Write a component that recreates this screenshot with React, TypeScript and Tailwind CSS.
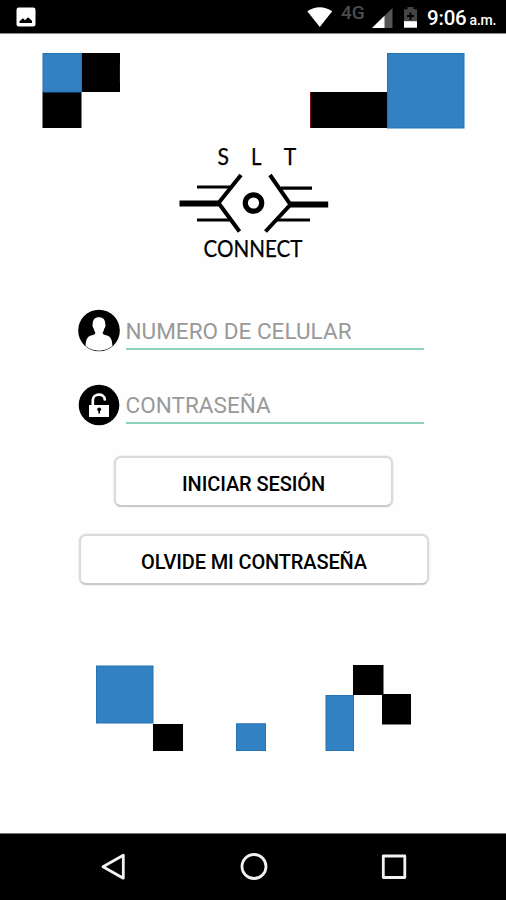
import React from "react";

const BLUE = "#3281c3";

function StatusBar() {
  return (
    <header className="flex h-[34px] shrink-0 items-start border-b border-[#8a8a8a] bg-black text-white">
      <svg className="mt-[7px] ml-4" width="20" height="20" viewBox="0 0 20 20" aria-hidden="true">
        <rect x="0.5" y="0.5" width="19" height="19" rx="2.2" fill="#fff" />
        <path d="M3.5 16 V14.2 L7 11.3 L9 13.3 L12 10.2 L16 13.8 V16 Z" fill="#000" />
      </svg>
      <svg className="mt-[7px] ml-[271px]" width="26" height="20" viewBox="0 0 26 20" aria-hidden="true">
        <path d="M0.3 4.2 Q12.7 -3.6 25.2 4.2 L12.8 20 Z" fill="#fff" />
      </svg>
      <span className="mt-[4px] ml-[8px] w-[27px] text-[19px] leading-[18px] font-medium text-[#4c4c4c]">4G</span>
      <svg className="mt-[8px] ml-[4px]" width="21" height="20" viewBox="0 0 21 20" aria-hidden="true">
        <path d="M0 20 L20.5 0 V20 Z" fill="#555" />
        <path d="M0 20 L12.5 7.8 V20 Z" fill="#fff" />
      </svg>
      <svg className="mt-[7px] ml-[10px]" width="15" height="21" viewBox="0 0 15 21" aria-hidden="true">
        <path d="M1 2.3 H4.5 V0 H10.5 V2.3 H14 V21 H1 Z" fill="#444" />
        <path d="M1 14.2 H14 V20.6 H1 Z" fill="#fff" />
        <path d="M4 9 H11 M7.5 5.5 V13" stroke="#000" strokeWidth="1.8" />
      </svg>
      <span className="mt-[8px] ml-[9px] text-[20.5px] leading-[20px] font-medium tracking-[-0.2px]">9:06</span>
      <span className="mt-[10px] ml-[3px] text-[14px] leading-[20px] font-medium tracking-[-0.2px]">a.m.</span>
    </header>
  );
}

function TopMosaic() {
  return (
    <div className="mt-[19px] flex justify-between pr-[41px] pl-[42px]">
      <svg width="79" height="76" viewBox="0 0 79 76" aria-hidden="true">
        <rect x="39" y="0" width="39" height="39" fill="#000" />
        <rect x="0.5" y="38.5" width="39" height="36.5" fill="#000" />
        <rect x="1" y="0.5" width="38.5" height="38.5" fill={BLUE} stroke="#2473b4" />
        <path d="M77.5 10 V29" stroke="#3c0505" />
      </svg>
      <svg width="155" height="76" viewBox="0 0 155 76" aria-hidden="true">
        <rect x="0" y="39" width="79" height="36" fill="#000" />
        <path d="M0.5 39 V75" stroke="#7d1515" />
        <rect x="77.5" y="0.5" width="76.5" height="74.5" fill={BLUE} stroke="#2473b4" />
      </svg>
    </div>
  );
}

function Logo() {
  return (
    <svg className="mt-[11px] ml-[170px]" width="170" height="124" viewBox="170 140 170 124" role="img">
      <g fontFamily="Lato, 'Open Sans', sans-serif" fill="#000" stroke="#000" strokeWidth="0.25">
        <text x="217.5" y="165" fontSize="22.5" textLength="11.5" lengthAdjust="spacingAndGlyphs">S</text>
        <text x="251" y="165" fontSize="22.5" textLength="10.5" lengthAdjust="spacingAndGlyphs">L</text>
        <text x="283.7" y="165" fontSize="22.5" textLength="12.5" lengthAdjust="spacingAndGlyphs">T</text>
        <text x="203.5" y="257" fontSize="23.5" textLength="99" lengthAdjust="spacingAndGlyphs">CONNECT</text>
      </g>
      <g fill="none" stroke="#000">
        <path d="M241 175 L218.5 203 L239.5 231.5" strokeWidth="4" />
        <path d="M270 175 L290.5 204.5 L265.5 231.5" strokeWidth="4" />
        <path d="M179.5 203.5 H218.5 M290 204.5 H328.2" strokeWidth="6" />
        <path d="M197 187 H230 M281 188.2 H312 M197 220 H230 M277 220 H310" strokeWidth="3.2" />
        <circle cx="253.5" cy="203" r="8.2" strokeWidth="5.2" />
      </g>
    </svg>
  );
}

function UserIcon() {
  return (
    <svg className="shrink-0" width="42" height="43" viewBox="0 0 42 43" aria-hidden="true">
      <circle cx="21" cy="21.5" r="20.8" fill="#000" />
      <path
        d="M21 8.2 C16.8 8.2 14.6 11 14.7 15.2 C14.1 16.3 14.8 18.4 15.6 19.2 C16 21.5 16.9 22.9 17.4 23.5 C17.4 25.2 15.8 25.8 13 26.6 C9.2 27.8 7.8 31 7.6 37 C15 43.2 27 43.2 34.4 37 C34.2 31 32.8 27.8 29 26.6 C26.2 25.8 24.6 25.2 24.6 23.5 C25.1 22.9 26 21.5 26.4 19.2 C27.2 18.4 27.9 16.3 27.3 15.2 C27.4 11 25.2 8.2 21 8.2 Z"
        fill="#fff"
      />
    </svg>
  );
}

function LockIcon() {
  return (
    <svg className="mt-px shrink-0" width="42" height="42" viewBox="0 0 42 42" aria-hidden="true">
      <circle cx="21" cy="21" r="20.3" fill="#000" />
      <path d="M14.8 22 V16 C15 8.8 26.6 8.8 26.8 15.5" fill="none" stroke="#fff" strokeWidth="2.7" strokeLinecap="round" />
      <rect x="11" y="21" width="20" height="12" fill="#fff" />
      <circle cx="21.2" cy="25.3" r="1.9" fill="#000" />
      <path d="M20.4 26 H22 V29.5 H20.4 Z" fill="#000" />
    </svg>
  );
}

function Field({ icon, label }: { icon: React.ReactNode; label: React.ReactNode }) {
  return (
    <div className="flex h-[43px] items-start pl-[78px]">
      {icon}
      <div className="ml-[5.5px] flex h-[41px] w-[298px] items-center border-b-2 border-[#8ed1bb] pt-[6px] text-[#999]">
        {label}
      </div>
    </div>
  );
}

function BottomMosaic() {
  return (
    <svg className="mt-[79px] ml-[95px] shrink-0" width="318" height="88" viewBox="95 664 318 88" aria-hidden="true">
      <g fill={BLUE} stroke="#2473b4">
        <rect x="96.5" y="666" width="56.5" height="57" />
        <rect x="236.5" y="723.8" width="29" height="26.7" />
        <rect x="326" y="695.5" width="27.5" height="55" />
      </g>
      <g fill="#000">
        <rect x="153" y="724" width="30" height="27" />
        <rect x="353" y="665" width="30.5" height="30" />
        <rect x="382" y="694" width="29" height="30.5" />
      </g>
    </svg>
  );
}

function NavBar() {
  return (
    <nav className="flex h-[67px] shrink-0 items-center border-t border-[#777] bg-black pl-[100px]">
      <svg width="28" height="28" viewBox="0 0 28 28" fill="none" stroke="#f2f2f2" strokeWidth="2.8" strokeLinejoin="round" aria-hidden="true">
        <path d="M3 13.7 L23.3 2.2 V25.2 Z" />
      </svg>
      <svg className="ml-[111.5px]" width="28" height="28" viewBox="0 0 28 28" fill="none" stroke="#f2f2f2" strokeWidth="2.8" aria-hidden="true">
        <circle cx="14" cy="13.5" r="12" />
      </svg>
      <svg className="ml-[113.5px]" width="26" height="26" viewBox="0 0 26 26" fill="none" stroke="#f2f2f2" strokeWidth="2.8" strokeLinejoin="round" aria-hidden="true">
        <rect x="2.3" y="2" width="21.5" height="21.5" />
      </svg>
    </nav>
  );
}

export default function App() {
  return (
    <div className="flex h-[900px] w-[506px] flex-col overflow-hidden bg-[#fefefe] font-['Roboto',sans-serif]">
      <StatusBar />
      <main className="flex flex-1 flex-col">
        <TopMosaic />
        <Logo />
        <form className="mt-[45px] flex flex-col">
          <Field icon={<UserIcon />} label={<span className="text-[22.5px] tracking-[0.03px]">NUMERO DE CELULAR</span>} />
          <div className="h-[31px]" />
          <Field icon={<LockIcon />} label={<span className="text-[22.5px] tracking-[0.03px]">CONTRASEÑA</span>} />
          <button type="button" className="mt-[30px] ml-[114px] h-[51px] w-[279px] rounded-[7px] border-2 border-[#dadada] border-b-[#cacaca] bg-white pt-[4px] text-[20px] leading-none font-medium tracking-[-0.1px] text-black shadow-[0_0_2px_rgba(0,0,0,0.15)]">
            INICIAR SESIÓN
          </button>
          <button type="button" className="mt-[27px] ml-[79px] h-[51px] w-[350px] rounded-[7px] border-2 border-[#dadada] border-b-[#cacaca] bg-white pt-[5px] text-[20px] leading-none font-medium tracking-[-0.14px] text-black shadow-[0_0_2px_rgba(0,0,0,0.15)]">
            OLVIDE MI CONTRASEÑA
          </button>
        </form>
        <BottomMosaic />
      </main>
      <NavBar />
    </div>
  );
}
